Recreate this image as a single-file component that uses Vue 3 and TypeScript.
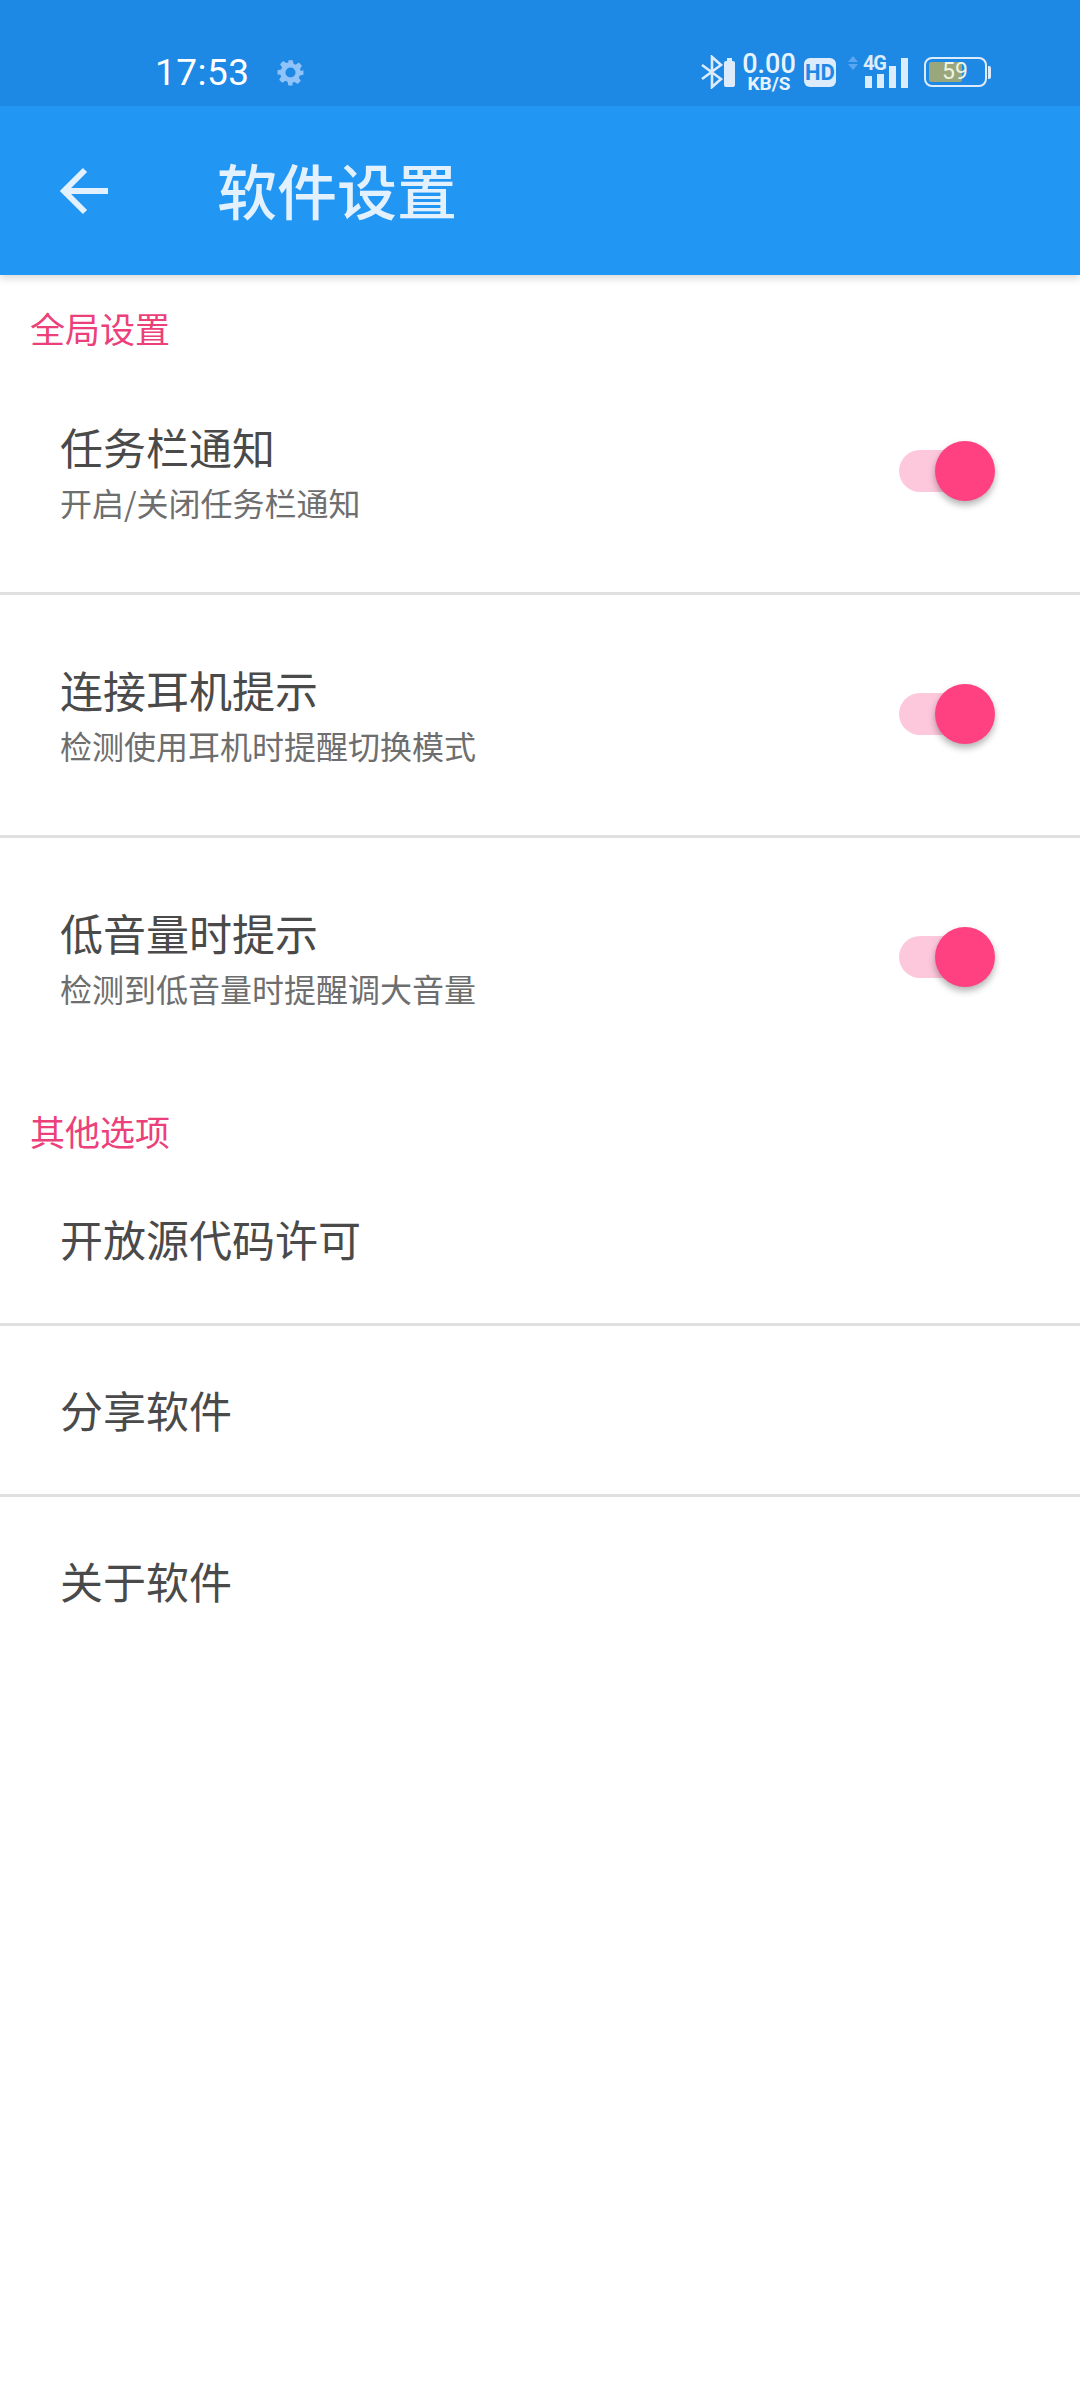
<template>
  <div class="page">
    <div class="status">
      <span class="time">17:53</span>
      <svg class="gear" viewBox="0 0 24 24" width="27" height="27">
        <path fill="#90c4f8" fill-rule="evenodd" d="M10 1h4l.7 3.200 1.900.8 2.800-1.800 2.800 2.800-1.800 2.800.8 1.900L23.500 10v4l-3.300.7-.8 1.900 1.800 2.800-2.800 2.800-2.800-1.800-1.900.8L13.900 23.500h-3.800l-.7-3.300-1.900-.8-2.800 1.800-2.800-2.800 1.800-2.800-.8-1.900L.5 14v-4l3.200-.7.8-1.900L2.700 4.600l2.800-2.800 2.800 1.800 1.900-.8zM12 7.500a4.500 4.500 0 1 0 0 9 4.500 4.500 0 0 0 0-9z"/>
      </svg>
      <div class="status-right">
        <svg class="bt" viewBox="0 0 34 34" width="34" height="34">
          <path d="M1 10l19 14-9 8V2l9 8L1 24" fill="none" stroke="#dcecfd" stroke-width="2.600"/>
          <rect x="23" y="6" width="11" height="26" rx="2" fill="#dcecfd"/>
          <rect x="26" y="3" width="5" height="4" fill="#dcecfd"/>
        </svg>
        <div class="speed"><span class="speed-num">0.00</span><span class="speed-unit">KB/S</span></div>
        <span class="hd">HD</span>
        <svg class="signal" viewBox="0 0 60 34" width="60" height="34">
          <path d="M0 7l5-6 5 6zM0 9h10l-5 6z" fill="#5ba6f0"/>
          <rect x="17" y="21" width="7" height="12" fill="#dcecfd"/>
          <rect x="29" y="19" width="7" height="14" fill="#dcecfd"/>
          <rect x="41" y="11" width="7" height="22" fill="#dcecfd"/>
          <rect x="53" y="3" width="7" height="30" fill="#dcecfd"/>
        </svg>
        <span class="four-g">4G</span>
        <div class="battery">
          <div class="battery-fill"></div>
          <span class="battery-num">59</span>
        </div>
        <span class="battery-cap"></span>
      </div>
    </div>
    <div class="toolbar">
      <svg class="back" viewBox="0 0 48 48" width="48" height="48">
        <path d="M48 24H5M25 3L4 24l21 21" fill="none" stroke="#e3f0fd" stroke-width="6"/>
      </svg>
      <span class="toolbar-title">软件设置</span>
    </div>

    <div class="section">全局设置</div>
    <template v-for="(r, i) in toggles" :key="r.title">
      <div class="row toggle-row">
        <div class="row-text">
          <div class="row-title">{{ r.title }}</div>
          <div class="row-sub">{{ r.sub }}</div>
        </div>
        <div class="switch">
          <div class="track"></div>
          <div class="thumb"></div>
        </div>
      </div>
      <div v-if="i < toggles.length - 1" class="divider"></div>
    </template>

    <div class="section">其他选项</div>
    <template v-for="(t, i) in links" :key="t">
      <div class="row link-row"><div class="row-title">{{ t }}</div></div>
      <div v-if="i < links.length - 1" class="divider"></div>
    </template>
  </div>
</template>

<script setup lang="ts">
const toggles = [
  { title: '任务栏通知', sub: '开启/关闭任务栏通知' },
  { title: '连接耳机提示', sub: '检测使用耳机时提醒切换模式' },
  { title: '低音量时提示', sub: '检测到低音量时提醒调大音量' },
];
const links = ['开放源代码许可', '分享软件', '关于软件'];
</script>

<style>
body {
  background: #fff;
}
</style>

<style scoped>
.page {
  width: 1080px;
  height: 2400px;
  overflow: hidden;
  background: #fff;
  font-family: "Noto Sans CJK SC", "Noto Sans", sans-serif;
}

.status {
  height: 106px;
  background: #1e88e5;
  display: flex;
  align-items: center;
  padding: 38px 89px 0 155px;
  box-sizing: border-box;
  position: relative;
  z-index: 2;
}

.time {
  font-family: Roboto, sans-serif;
  font-size: 37px;
  color: #fff;
  letter-spacing: 0.5px;
}

.gear {
  margin-left: 27px;
}

.status-right {
  margin-left: auto;
  display: flex;
  align-items: center;
  position: relative;
}

.speed {
  width: 52px;
  display: flex;
  flex-direction: column;
  align-items: center;
  margin-left: 8px;
  font-family: Roboto, sans-serif;
  color: #e8f3fe;
  font-weight: 500;
  white-space: nowrap;
}

.speed-num {
  font-size: 27px;
  line-height: 23px;
}

.speed-unit {
  font-size: 19px;
  line-height: 16px;
  font-weight: 700;
}

.hd {
  margin-left: 9px;
  width: 32px;
  height: 29px;
  line-height: 29px;
  border-radius: 6px;
  background: #dcecfd;
  color: #1e88e5;
  text-align: center;
  font-family: Roboto, sans-serif;
  font-size: 22px;
  font-weight: 700;
}

.signal {
  margin-left: 12px;
}

.four-g {
  position: absolute;
  right: 105px;
  top: 2px;
  font-family: Roboto, sans-serif;
  font-size: 20px;
  line-height: 16px;
  font-weight: 700;
  letter-spacing: -1px;
  color: #dcecfd;
}

.battery {
  margin-left: 16px;
  width: 63px;
  height: 30px;
  box-sizing: border-box;
  border: 2px solid #dcecfd;
  border-radius: 8px;
  position: relative;
  padding: 3px;
}

.battery-fill {
  width: 33px;
  height: 100%;
  background: #9aa77d;
  border-radius: 2px;
}

.battery-num {
  position: absolute;
  left: 16px;
  top: 0;
  font-family: Roboto, sans-serif;
  font-size: 23px;
  line-height: 26px;
  color: #eef4e0;
}

.battery-cap {
  width: 3px;
  height: 13px;
  margin-left: 1px;
  background: #dcecfd;
  border-radius: 0 2px 2px 0;
}

.toolbar {
  height: 169px;
  background: #2196f3;
  display: flex;
  align-items: center;
  padding: 0 0 6px 60px;
  box-sizing: border-box;
  box-shadow: 0 3px 8px rgba(0, 0, 0, 0.16);
  position: relative;
}

.back {
  margin-top: 6px;
}

.toolbar-title {
  margin-left: 109px;
  font-size: 60px;
  font-weight: 500;
  color: #e3f0fd;
  line-height: 1;
  padding-top: 3px;
}

.section {
  padding-left: 30px;
  font-size: 35px;
  line-height: 49px;
  color: #ec407a;
  margin-top: 28px;
}

.row {
  padding: 0 60px;
  display: flex;
  align-items: center;
  justify-content: space-between;
  box-sizing: border-box;
}

.toggle-row {
  height: 240px;
}

.link-row {
  height: 168px;
  padding-bottom: 2px;
}

.row-title {
  font-size: 43px;
  line-height: 60px;
  color: #4a4a4a;
}

.row-sub {
  font-size: 32px;
  line-height: 52px;
  color: #6e6e6e;
}

.divider {
  height: 3px;
  background: #e0e0e0;
}

.switch {
  width: 96px;
  height: 60px;
  position: relative;
  margin-right: 25px;
  margin-bottom: 2px;
}

.track {
  position: absolute;
  left: 0;
  right: 10px;
  top: 9px;
  height: 42px;
  border-radius: 21px;
  background: #fdc8dc;
}

.thumb {
  position: absolute;
  right: 0;
  top: 0;
  width: 60px;
  height: 60px;
  border-radius: 50%;
  background: #ff4081;
  box-shadow: 0 4px 7px rgba(0, 0, 0, 0.3);
}
</style>
